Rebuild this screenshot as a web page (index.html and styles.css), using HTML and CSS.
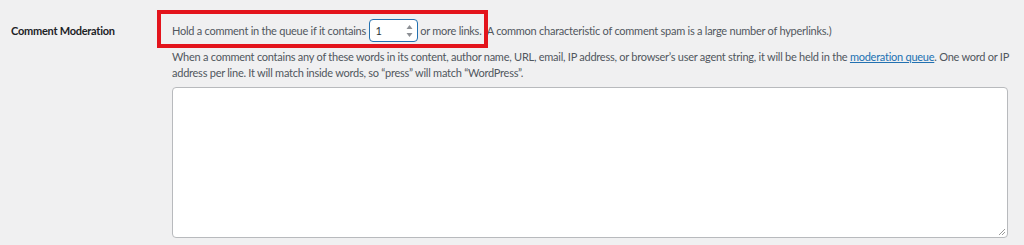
FILE: index.html
```html
<!DOCTYPE html>
<html>
<head>
<meta charset="utf-8">
<link rel="stylesheet" href="styles.css">
</head>
<body>
<div class="row">
  <div class="label">Comment Moderation</div>
  <div class="field">
    <p class="first">Hold a comment in the queue if it contains <span class="num"><span class="num-val">1</span><svg class="spin" width="7" height="14" viewBox="0 0 7 14"><path d="M3.5 1 L6.5 5 L0.5 5 Z" fill="#8c8f94"/><path d="M3.5 13 L6.5 9 L0.5 9 Z" fill="#8c8f94"/></svg></span> or more links. (A common characteristic of comment spam is a large number of hyperlinks.)</p>
    <p class="desc">When a comment contains any of these words in its content, author name, URL, email, IP address, or browser’s user agent string, it will be held in the <a href="#">moderation queue</a>. One word or IP address per line. It will match inside words, so “press” will match “WordPress”.</p>
    <div class="textarea"><svg class="grip" width="9" height="9" viewBox="0 0 9 9"><path d="M8 2 L2 8 M8 5 L5 8" stroke="#9a9a9a" stroke-width="1"/></svg></div>
    <div class="highlight"></div>
  </div>
</div>
</body>
</html>
```

FILE: styles.css
```css
html, body {
  margin: 0;
  padding: 0;
  background: #f0f0f1;
}
body {
  font-family: "Lato", "Open Sans", sans-serif;
  font-size: 11px;
  letter-spacing: -0.25px;
  color: #50575e;
}
.row {
  display: flex;
  padding-top: 19px;
}
.label {
  width: 161px;
  padding-left: 11px;
  font-weight: 700;
  color: #1d2327;
  line-height: 23px;
}
.field {
  position: relative;
  width: 836px;
}
.first {
  margin: 0;
  line-height: 23px;
  white-space: nowrap;
}
.num {
  display: inline-flex;
  align-items: center;
  justify-content: space-between;
  box-sizing: border-box;
  width: 49px;
  height: 23px;
  vertical-align: top;
  border: 1.5px solid #2271b1;
  border-radius: 4px;
  background: #fff;
  padding: 0 4px 0 6px;
  color: #2c3338;
}
.desc {
  margin: 7px -10px 0 0;
  line-height: 16px;
}
.desc a {
  color: #2271b1;
  text-decoration: underline;
}
.textarea {
  position: relative;
  box-sizing: border-box;
  margin-top: 6px;
  height: 151px;
  border: 1px solid #b8babd;
  border-radius: 4px;
  background: #fff;
}
.grip {
  position: absolute;
  right: 1px;
  bottom: 1px;
}
.highlight {
  position: absolute;
  left: -15px;
  top: -9px;
  width: 331px;
  height: 38px;
  box-sizing: border-box;
  border: 4px solid #e3141c;
}
```
